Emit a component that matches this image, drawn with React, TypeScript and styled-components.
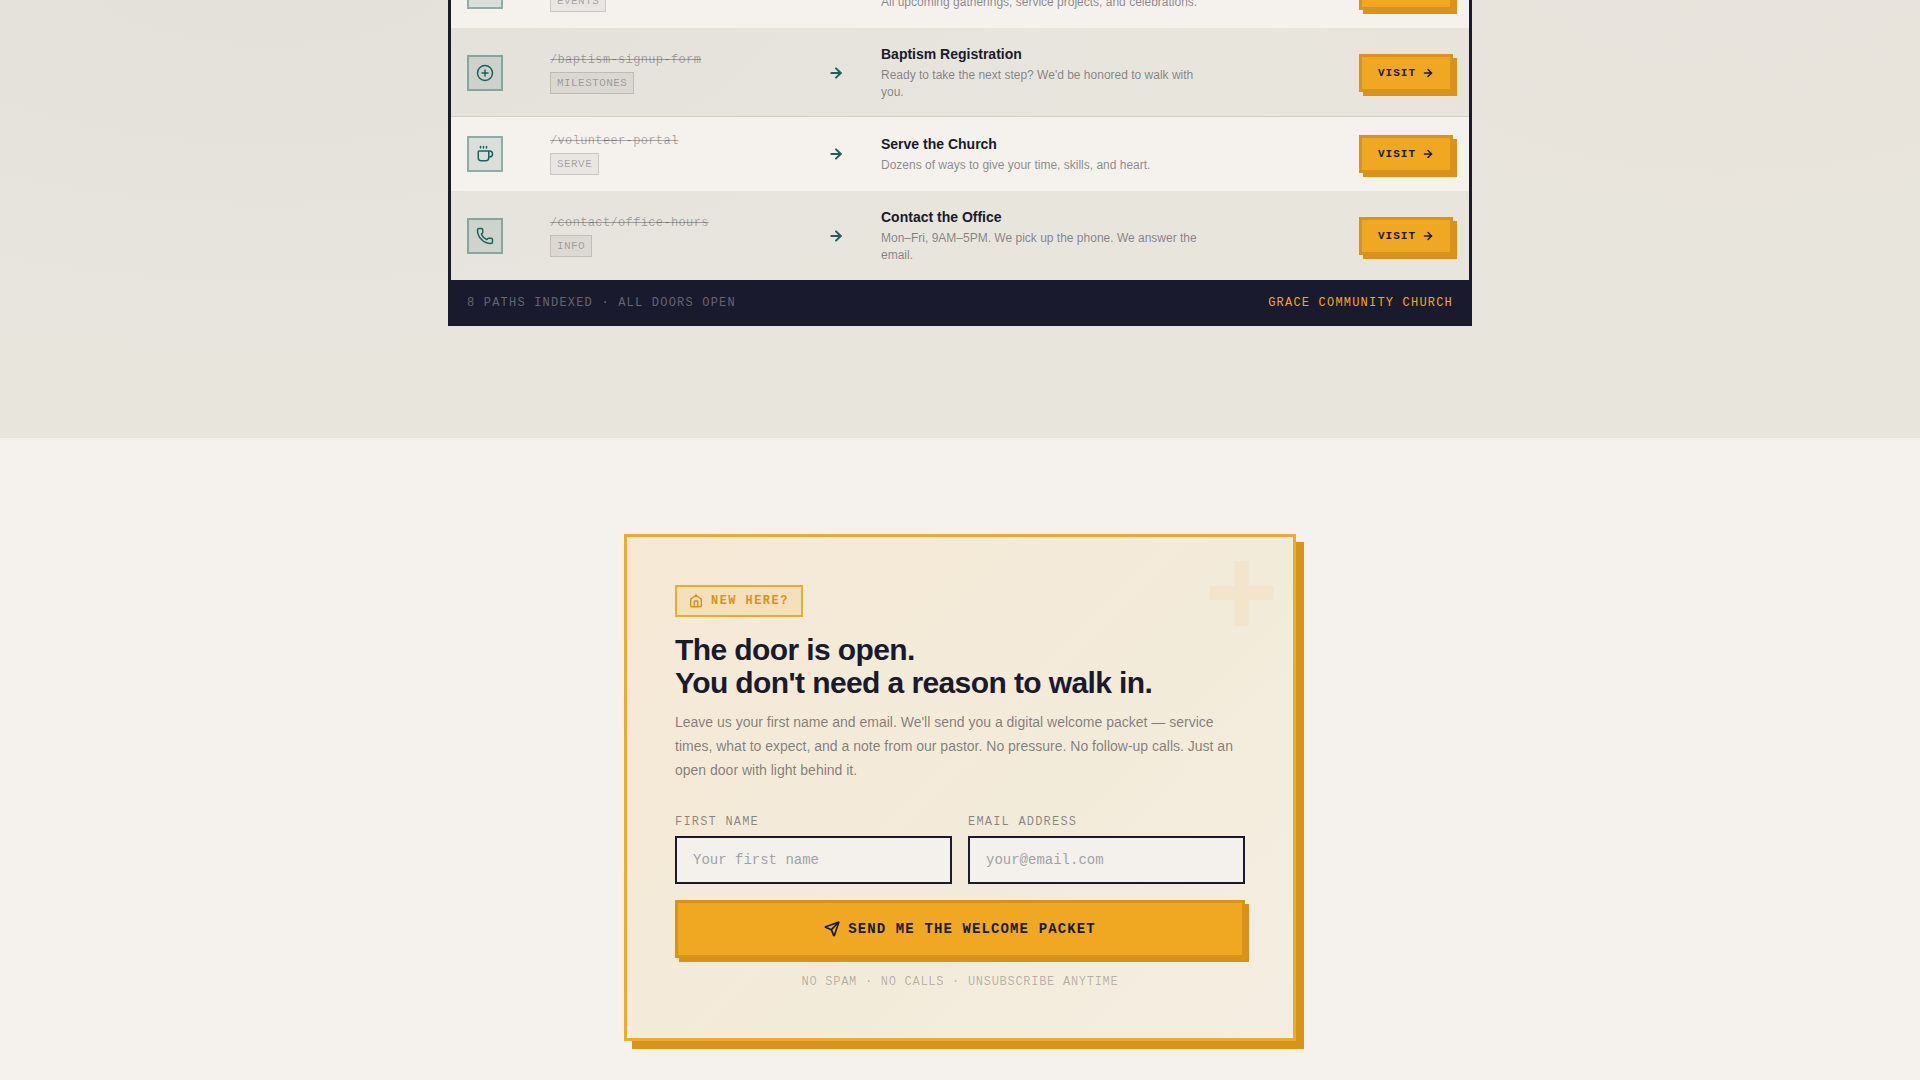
import React from "react";
import styled, { createGlobalStyle } from "styled-components";
import { ArrowRight, Calendar, CirclePlus, Coffee, Phone, Send } from "lucide-react";

const ink = "#1a1a2e";
const amber = "#f0a822";
const amberDark = "#d9931a";
const teal = "#1f6060";
const cream = "#f5f1ec";
const sans = `"Liberation Sans", Arial, sans-serif`;
const mono = `"Liberation Mono", "Courier New", monospace`;

const GlobalStyle = createGlobalStyle`
  *, *::before, *::after { box-sizing: border-box; }
  body { margin: 0; background: ${cream}; color: ${ink}; font-family: ${sans}; }
  h2, p { margin: 0; }
`;

/* The ledger opens part-way down, with its events row cut by the top edge. */
const LedgerSection = styled.section`
  margin-top: -46px;
  padding: 0 24px 112px;
  background:
    radial-gradient(ellipse 900px 420px at 14% 0%, rgba(31, 96, 96, 0.03), transparent),
    radial-gradient(ellipse 600px 340px at 90% 0%, rgba(217, 120, 120, 0.025), transparent),
    #e8e5dd;
`;

const Ledger = styled.div`
  max-width: 1024px;
  margin: 0 auto;
  border: solid ${ink};
  border-width: 0 3px;
`;

const Table = styled.table`
  width: 100%;
  border-collapse: collapse;
  table-layout: fixed;
`;

const Col = styled.col<{ $w?: number }>`
  width: ${(p) => (p.$w ? `${p.$w}px` : "auto")};
`;

const Row = styled.tr<{ $shaded: boolean }>`
  background: ${(p) => (p.$shaded ? "transparent" : cream)};
  box-shadow: ${(p) => (p.$shaded ? "inset 0 -1px 0 rgba(26, 26, 46, 0.1)" : "none")};
  &:last-child { box-shadow: none; }
`;

const Cell = styled.td<{ $align?: "center" | "right" }>`
  padding: 16px;
  vertical-align: middle;
  text-align: ${(p) => p.$align ?? "left"};
  line-height: 0;
`;

const IconBox = styled.span`
  display: inline-flex;
  align-items: center;
  justify-content: center;
  width: 36px;
  height: 36px;
  color: ${teal};
  background: rgba(31, 96, 96, 0.12);
  border: 2px solid rgba(31, 96, 96, 0.4);
`;

const PathStack = styled.div`
  display: flex;
  flex-direction: column;
  align-items: flex-start;
  gap: 4px;
`;

const OldPath = styled.s`
  font: 12px/16px ${mono};
  letter-spacing: 0.03em;
  color: rgba(26, 26, 46, 0.35);
`;

const Tag = styled.span`
  padding: 2px 6px;
  font: 11px/16px ${mono};
  letter-spacing: 0.04em;
  color: rgba(26, 26, 46, 0.35);
  background: rgba(26, 26, 46, 0.05);
  border: 1px solid rgba(26, 26, 46, 0.15);
`;

const Flow = styled.span`
  color: ${teal};
`;

const Name = styled.p`
  font: bold 14px/21px ${sans};
`;

const Desc = styled.p`
  max-width: 320px;
  margin-top: 2px;
  font: 12px/17px ${sans};
  color: rgba(26, 26, 46, 0.5);
`;

const VisitLink = styled.a`
  display: inline-flex;
  align-items: center;
  gap: 6px;
  height: 38px;
  padding: 0 16px;
  font: bold 11px/16px ${mono};
  letter-spacing: 0.09em;
  color: ${ink};
  text-decoration: none;
  background: ${amber};
  border: 3px solid ${amberDark};
  box-shadow: 4px 4px 0 ${amberDark};
`;

const LedgerFooter = styled.footer`
  display: flex;
  justify-content: space-between;
  padding: 14px 16px;
  font: 12px/18px ${mono};
  letter-spacing: 0.1em;
  color: rgba(245, 242, 237, 0.35);
  background: ${ink};
`;

const Church = styled.span`
  color: ${amber};
`;

const WelcomeSection = styled.section`
  padding: 96px 24px 32px;
`;

const Card = styled.div`
  position: relative;
  max-width: 672px;
  margin: 0 auto;
  padding: 48px;
  background: linear-gradient(135deg, #f6e9d6 0%, #f3ebda 60%, #f5ede1 100%);
  border: 3px solid #e9ac33;
  box-shadow: 8px 8px 0 ${amberDark};
`;

const Plus = styled.span`
  position: absolute;
  top: -9px;
  right: 14px;
  font: bold 128px/128px ${sans};
  color: rgba(245, 160, 50, 0.08);
  pointer-events: none;
`;

const Badge = styled.span`
  display: inline-flex;
  align-items: center;
  gap: 8px;
  padding: 6px 12px;
  font: bold 12px/16px ${mono};
  letter-spacing: 0.12em;
  color: ${amberDark};
  background: rgba(240, 168, 34, 0.15);
  border: 2px solid #e9ac33;
`;

const BadgeLine = styled.div`
  display: flex;
`;

const Title = styled.h2`
  margin-top: 16px;
  font: bold 30px/33px ${sans};
  letter-spacing: -0.02em;
`;

const Lead = styled.p`
  margin-top: 11px;
  font: 14px/24px ${sans};
  color: rgba(26, 26, 46, 0.55);
`;

const Form = styled.form`
  display: flex;
  flex-direction: column;
  gap: 16px;
  margin-top: 32px;
`;

const Fields = styled.div`
  display: grid;
  grid-template-columns: repeat(auto-fit, minmax(240px, 1fr));
  gap: 16px;
`;

const Field = styled.div`
  display: flex;
  flex-direction: column;
  gap: 6px;
`;

const Label = styled.label`
  font: 12px/16px ${mono};
  letter-spacing: 0.1em;
  color: rgba(26, 26, 46, 0.5);
`;

const Input = styled.input`
  width: 100%;
  height: 48px;
  padding: 0 16px;
  font: 14px/20px ${mono};
  color: ${ink};
  background: #f4f1ed;
  border: 2px solid ${ink};
  border-radius: 0;
  &::placeholder { color: #a0a2aa; opacity: 1; }
`;

const Submit = styled.button`
  display: flex;
  align-items: center;
  justify-content: center;
  gap: 8px;
  height: 58px;
  font: bold 14px/20px ${mono};
  letter-spacing: 0.08em;
  color: ${ink};
  background: ${amber};
  border: 3px solid ${amberDark};
  box-shadow: 4px 4px 0 ${amberDark};
  cursor: pointer;
`;

const Note = styled.p`
  font: 12px/16px ${mono};
  letter-spacing: 0.06em;
  text-align: center;
  color: rgba(26, 26, 46, 0.3);
`;

const HouseIcon = () => (
  <svg width="14" height="14" viewBox="0 0 24 24" fill="none" stroke="currentColor" strokeWidth="2.5" strokeLinecap="round" strokeLinejoin="round" aria-hidden="true">
    <path d="M3 9l9-7 9 7v11a2 2 0 0 1-2 2H5a2 2 0 0 1-2-2z" />
    <path d="M9 22V12h6v10" />
  </svg>
);

const rows = [
  { Icon: Calendar, path: "/events-calendar", tag: "EVENTS", name: "Events Calendar", desc: "All upcoming gatherings, service projects, and celebrations." },
  { Icon: CirclePlus, path: "/baptism-signup-form", tag: "MILESTONES", name: "Baptism Registration", desc: "Ready to take the next step? We'd be honored to walk with you." },
  { Icon: Coffee, path: "/volunteer-portal", tag: "SERVE", name: "Serve the Church", desc: "Dozens of ways to give your time, skills, and heart." },
  { Icon: Phone, path: "/contact/office-hours", tag: "INFO", name: "Contact the Office", desc: "Mon–Fri, 9AM–5PM. We pick up the phone. We answer the email." },
];

export default function App() {
  return (
    <>
      <GlobalStyle />
      <main>
        <LedgerSection>
          <Ledger>
            <Table>
              <colgroup>
                <Col $w={83} />
                <Col $w={273} />
                <Col $w={58} />
                <Col />
                <Col $w={140} />
              </colgroup>
              <tbody>
                {rows.map(({ Icon, path, tag, name, desc }, i) => (
                  <Row key={path} $shaded={i % 2 === 1}>
                    <Cell>
                      <IconBox><Icon size={18} /></IconBox>
                    </Cell>
                    <Cell>
                      <PathStack>
                        <OldPath>{path}</OldPath>
                        <Tag>{tag}</Tag>
                      </PathStack>
                    </Cell>
                    <Cell $align="center">
                      <Flow><ArrowRight size={16} strokeWidth={3} /></Flow>
                    </Cell>
                    <Cell>
                      <Name>{name}</Name>
                      <Desc>{desc}</Desc>
                    </Cell>
                    <Cell $align="right">
                      <VisitLink href="#visit">
                        VISIT
                        <ArrowRight size={12} strokeWidth={3} />
                      </VisitLink>
                    </Cell>
                  </Row>
                ))}
              </tbody>
            </Table>
            <LedgerFooter>
              <span>8 PATHS INDEXED · ALL DOORS OPEN</span>
              <Church>GRACE COMMUNITY CHURCH</Church>
            </LedgerFooter>
          </Ledger>
        </LedgerSection>

        <WelcomeSection>
          <Card>
            <Plus aria-hidden="true">+</Plus>
            <BadgeLine>
              <Badge>
                <HouseIcon />
                NEW HERE?
              </Badge>
            </BadgeLine>
            <Title>
              The door is open.
              <br />
              You don't need a reason to walk in.
            </Title>
            <Lead>
              Leave us your first name and email. We'll send you a digital welcome packet — service times, what to
              expect, and a note from our pastor. No pressure. No follow-up calls. Just an open door with light behind
              it.
            </Lead>
            <Form onSubmit={(e) => e.preventDefault()}>
              <Fields>
                <Field>
                  <Label htmlFor="first-name">FIRST NAME</Label>
                  <Input id="first-name" type="text" placeholder="Your first name" />
                </Field>
                <Field>
                  <Label htmlFor="email">EMAIL ADDRESS</Label>
                  <Input id="email" type="email" placeholder="your@email.com" />
                </Field>
              </Fields>
              <Submit type="submit">
                <Send size={16} strokeWidth={2.5} />
                SEND ME THE WELCOME PACKET
              </Submit>
              <Note>NO SPAM · NO CALLS · UNSUBSCRIBE ANYTIME</Note>
            </Form>
          </Card>
        </WelcomeSection>
      </main>
    </>
  );
}
